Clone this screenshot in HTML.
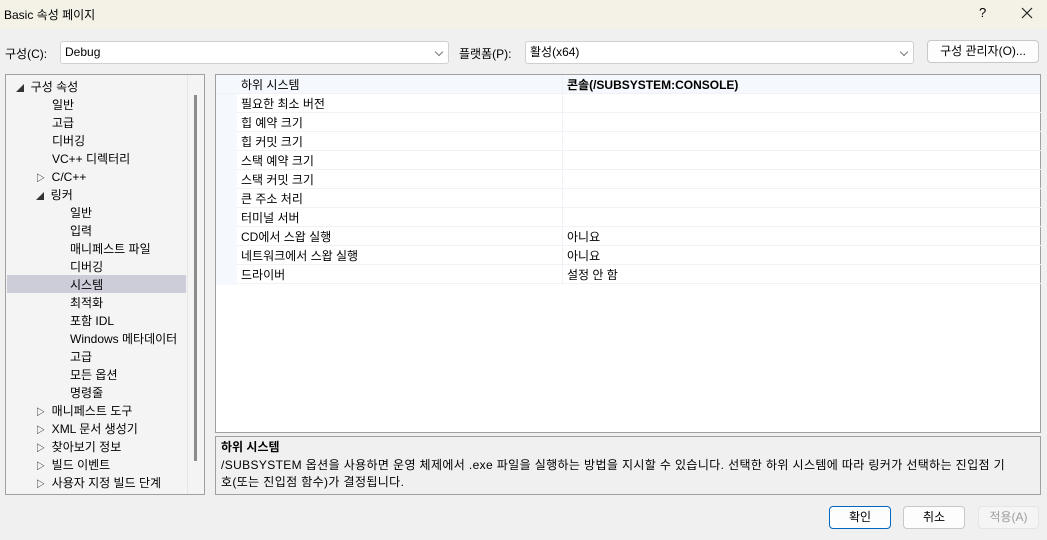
<!DOCTYPE html>
<html><head><meta charset="utf-8"><style>
*{margin:0;padding:0;box-sizing:border-box}
body{width:1047px;height:540px;background:#f0f0f0;font-family:"Liberation Sans","Noto Sans CJK KR",sans-serif;font-size:12px;color:#000;position:relative;overflow:hidden}
.a{position:absolute;white-space:nowrap}
.title{left:0;top:0;width:1047px;height:29px;background:#f4f2e6}
.combo{background:#fff;border:1px solid #d0d0d0;border-radius:3px;height:23px;line-height:21px;padding-left:4px}
.chev{position:absolute;right:6px;top:7px;width:6px;height:6px;border-right:1px solid #777;border-bottom:1px solid #777;transform:rotate(45deg)}
.btn{background:#fdfdfd;border:1px solid #c8c8c8;border-radius:4px;text-align:center;line-height:21px}
.tree{left:5px;top:74px;width:200px;height:421px;background:#f4f4f4;border:1px solid #a0a0a0}
.ti{position:absolute;height:18px;line-height:18px;top:1px}
.grid{left:215px;top:74px;width:826px;height:359px;background:#fff;border:1px solid #a0a0a0}
.row{position:absolute;left:0;width:824px;height:19px;border-bottom:1px solid #f0f2f6}
.row span{position:absolute;top:2px;line-height:17px}
.desc{left:215px;top:436px;width:826px;height:59px;background:#f0f0f0;border:1px solid #a0a0a0}
</style></head><body>
<div class="a title"></div>
<div class="a" style="left:4px;top:6px;font-size:12px">Basic 속성 페이지</div>
<div class="a" style="left:979px;top:5px;font-size:13px">?</div>
<svg class="a" style="left:1021px;top:7px" width="12" height="12"><path d="M1 1L11 11M11 1L1 11" stroke="#222" stroke-width="1.2"/></svg>

<div class="a" style="left:5px;top:45px">구성(C):</div>
<div class="a combo" style="left:60px;top:41px;width:389px">Debug<div class="chev"></div></div>
<div class="a" style="left:459px;top:45px">플랫폼(P):</div>
<div class="a combo" style="left:525px;top:41px;width:389px">활성(x64)<div class="chev"></div></div>
<div class="a btn" style="left:927px;top:40px;width:112px;height:23px">구성 관리자(O)...</div>

<div class="a tree">
<div style="position:absolute;left:181px;top:0;width:1px;height:419px;background:#e6e6e6"></div>
<div style="position:absolute;left:188px;top:20px;width:3px;height:366px;background:#8c8c8c"></div>
<div class="ti" style="left:10px;top:3px"><span style="font-size:8px;color:#333">◢</span>&nbsp; 구성 속성</div>
<div class="ti" style="left:46px;top:21px">일반</div>
<div class="ti" style="left:46px;top:39px">고급</div>
<div class="ti" style="left:46px;top:57px">디버깅</div>
<div class="ti" style="left:46px;top:75px">VC++ 디렉터리</div>
<div class="ti" style="left:30px;top:93px"><span style="font-size:9px">▷</span>&nbsp; C/C++</div>
<div class="ti" style="left:30px;top:111px"><span style="font-size:8px;color:#333">◢</span>&nbsp; 링커</div>
<div class="ti" style="left:64px;top:129px">일반</div>
<div class="ti" style="left:64px;top:147px">입력</div>
<div class="ti" style="left:64px;top:165px">매니페스트 파일</div>
<div class="ti" style="left:64px;top:183px">디버깅</div>
<div style="position:absolute;left:1px;top:200px;width:179px;height:18px;background:#cdcdd9"></div>
<div class="ti" style="left:64px;top:201px">시스템</div>
<div class="ti" style="left:64px;top:219px">최적화</div>
<div class="ti" style="left:64px;top:237px">포함 IDL</div>
<div class="ti" style="left:64px;top:255px">Windows 메타데이터</div>
<div class="ti" style="left:64px;top:273px">고급</div>
<div class="ti" style="left:64px;top:291px">모든 옵션</div>
<div class="ti" style="left:64px;top:309px">명령줄</div>
<div class="ti" style="left:30px;top:327px"><span style="font-size:9px">▷</span>&nbsp; 매니페스트 도구</div>
<div class="ti" style="left:30px;top:345px"><span style="font-size:9px">▷</span>&nbsp; XML 문서 생성기</div>
<div class="ti" style="left:30px;top:363px"><span style="font-size:9px">▷</span>&nbsp; 찾아보기 정보</div>
<div class="ti" style="left:30px;top:381px"><span style="font-size:9px">▷</span>&nbsp; 빌드 이벤트</div>
<div class="ti" style="left:30px;top:399px"><span style="font-size:9px">▷</span>&nbsp; 사용자 지정 빌드 단계</div>
</div>

<div class="a grid">
<div style="position:absolute;left:0;top:0;width:21px;height:210px;background:#f5f8fc"></div>
<div style="position:absolute;left:0;top:0;width:824px;height:19px;background:#f5f8fc"></div>
<div style="position:absolute;left:346px;top:0;width:1px;height:210px;background:#eef1f6"></div>
<div class="row" style="top:0"><span style="left:25px">하위 시스템</span><span style="left:351px;font-weight:bold">콘솔(/SUBSYSTEM:CONSOLE)</span></div>
<div class="row" style="top:19px;left:21px"><span style="left:4px">필요한 최소 버전</span></div>
<div class="row" style="top:38px;left:21px"><span style="left:4px">힙 예약 크기</span></div>
<div class="row" style="top:57px;left:21px"><span style="left:4px">힙 커밋 크기</span></div>
<div class="row" style="top:76px;left:21px"><span style="left:4px">스택 예약 크기</span></div>
<div class="row" style="top:95px;left:21px"><span style="left:4px">스택 커밋 크기</span></div>
<div class="row" style="top:114px;left:21px"><span style="left:4px">큰 주소 처리</span></div>
<div class="row" style="top:133px;left:21px"><span style="left:4px">터미널 서버</span></div>
<div class="row" style="top:152px;left:21px"><span style="left:4px">CD에서 스왑 실행</span><span style="left:330px">아니요</span></div>
<div class="row" style="top:171px;left:21px"><span style="left:4px">네트워크에서 스왑 실행</span><span style="left:330px">아니요</span></div>
<div class="row" style="top:190px;left:21px"><span style="left:4px">드라이버</span><span style="left:330px">설정 안 함</span></div>
</div>

<div class="a desc">
<div class="a" style="left:5px;top:2px;font-weight:bold;line-height:16px">하위 시스템</div>
<div class="a" style="left:5px;top:20px;line-height:17px;letter-spacing:0.37px">/SUBSYSTEM 옵션을 사용하면 운영 체제에서 .exe 파일을 실행하는 방법을 지시할 수 있습니다. 선택한 하위 시스템에 따라 링커가 선택하는 진입점 기</div>
<div class="a" style="left:5px;top:37px;line-height:17px;letter-spacing:0.37px">호(또는 진입점 함수)가 결정됩니다.</div>
</div>

<div class="a btn" style="left:829px;top:506px;width:62px;height:23px;border:1px solid #0067c0;line-height:21px">확인</div>
<div class="a btn" style="left:903px;top:506px;width:62px;height:23px">취소</div>
<div class="a btn" style="left:978px;top:506px;width:61px;height:23px;color:#9d9d9d;border-color:#e5e5e5;background:#f5f5f5">적용(A)</div>
</body></html>
